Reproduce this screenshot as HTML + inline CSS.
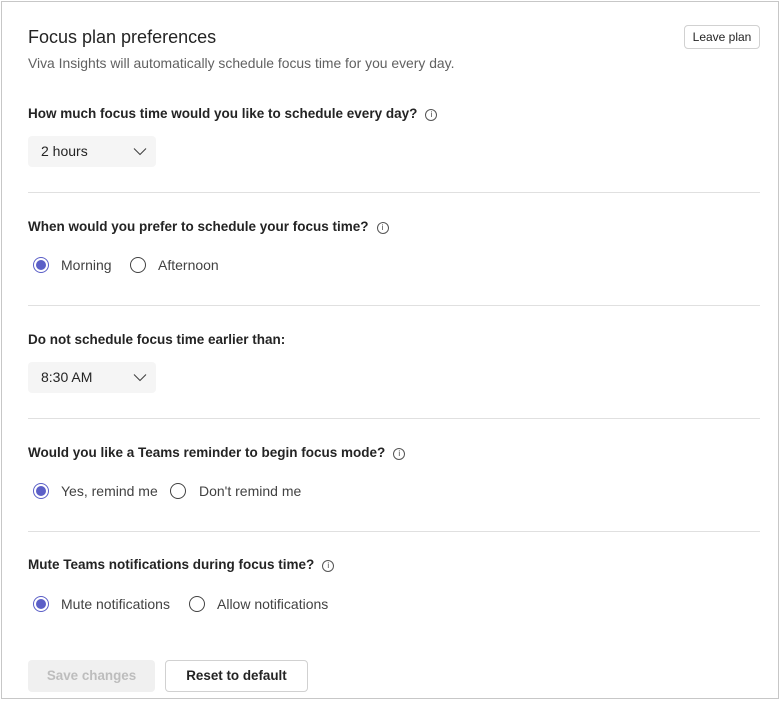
<!DOCTYPE html>
<html><head><meta charset="utf-8"><style>
*{box-sizing:border-box;margin:0;padding:0}
body{width:781px;height:701px;background:#fff;font-family:"Liberation Sans",sans-serif;color:#242424;position:relative;overflow:hidden}
.frame{position:absolute;left:1px;top:1px;width:778px;height:698px;border:1px solid #c7c7c7}
.a{position:absolute;white-space:nowrap}
.q{font-size:13.5px;font-weight:bold;color:#242424}
.info{display:inline-block;width:12px;height:12px;border:1px solid #555;border-radius:50%;font-size:8px;line-height:10px;text-align:center;font-weight:normal;margin-left:8px;vertical-align:1px;color:#444}
.dd{position:absolute;left:28px;width:128px;height:31px;background:#f5f5f5;border-radius:4px;font-size:14px;line-height:31px;padding-left:13px}
.dd svg{position:absolute;right:9px;top:11px}
.hr{position:absolute;left:28px;width:732px;height:1px;background:#e0e0e0}
.r{position:absolute;width:16px;height:16px;border-radius:50%;border:1px solid #424242}
.r.on{border-color:#5b5fc7}
.r.on::after{content:"";position:absolute;left:2px;top:2px;width:10px;height:10px;border-radius:50%;background:#5b5fc7}
.lbl{position:absolute;font-size:14px;color:#424242;line-height:16px}
.btn{position:absolute;border:1px solid #d1d1d1;border-radius:4px;background:#fff;text-align:center;font-weight:bold;color:#242424}
</style></head><body>
<div class="frame"></div>
<div class="a" style="left:28px;top:27px;font-size:18px;color:#242424">Focus plan preferences</div>
<div class="a" style="left:28px;top:55px;font-size:13.9px;color:#616161">Viva Insights will automatically schedule focus time for you every day.</div>
<div class="btn" style="left:684px;top:25px;width:76px;height:24px;font-size:12px;line-height:22px;font-weight:normal">Leave plan</div>

<div class="a q" style="left:28px;top:106px">How much focus time would you like to schedule every day?<span class="info">i</span></div>
<div class="dd" style="top:136px">2 hours<svg width="14" height="9" viewBox="0 0 14 9"><path d="M1 1.5L7 7.5L13 1.5" fill="none" stroke="#424242" stroke-width="1.1"/></svg></div>
<div class="hr" style="top:192px"></div>

<div class="a q" style="left:28px;top:219px">When would you prefer to schedule your focus time?<span class="info">i</span></div>
<div class="r on" style="left:33px;top:257px"></div><div class="lbl" style="left:61px;top:257px">Morning</div>
<div class="r" style="left:130px;top:257px"></div><div class="lbl" style="left:158px;top:257px">Afternoon</div>
<div class="hr" style="top:305px"></div>

<div class="a q" style="left:28px;top:332px">Do not schedule focus time earlier than:</div>
<div class="dd" style="top:362px">8:30 AM<svg width="14" height="9" viewBox="0 0 14 9"><path d="M1 1.5L7 7.5L13 1.5" fill="none" stroke="#424242" stroke-width="1.1"/></svg></div>
<div class="hr" style="top:418px"></div>

<div class="a q" style="left:28px;top:445px">Would you like a Teams reminder to begin focus mode?<span class="info">i</span></div>
<div class="r on" style="left:33px;top:483px"></div><div class="lbl" style="left:61px;top:483px">Yes, remind me</div>
<div class="r" style="left:170px;top:483px"></div><div class="lbl" style="left:199px;top:483px">Don't remind me</div>
<div class="hr" style="top:531px"></div>

<div class="a q" style="left:28px;top:557px">Mute Teams notifications during focus time?<span class="info">i</span></div>
<div class="r on" style="left:33px;top:596px"></div><div class="lbl" style="left:61px;top:596px">Mute notifications</div>
<div class="r" style="left:189px;top:596px"></div><div class="lbl" style="left:217px;top:596px">Allow notifications</div>

<div class="btn" style="left:28px;top:660px;width:127px;height:32px;border:none;background:#f0f0f0;color:#bdbdbd;font-size:13.4px;line-height:32px">Save changes</div>
<div class="btn" style="left:165px;top:660px;width:143px;height:32px;font-size:13.4px;line-height:30px">Reset to default</div>
</body></html>
